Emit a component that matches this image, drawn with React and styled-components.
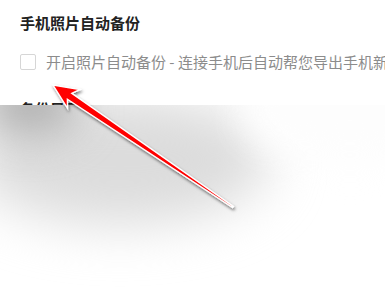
import React from 'react';
import styled, { createGlobalStyle } from 'styled-components';

const GlobalStyle = createGlobalStyle`
  html, body {
    margin: 0;
    background: #fff;
  }
  body {
    font-family: "Noto Sans CJK SC", "Noto Sans", sans-serif;
  }
`;

const Page = styled.div`
  position: relative;
  width: 385px;
  height: 300px;
  overflow: hidden;
  background: #fff;
`;

const Panel = styled.div`
  padding: 12px 0 0 20px;
  display: flex;
  flex-direction: column;
`;

const Heading = styled.h3`
  margin: ${(props) => props.$gap || 0}px 0 0;
  font-size: 15px;
  line-height: 22px;
  font-weight: 700;
  color: #222;
  white-space: nowrap;
`;

const OptionRow = styled.label`
  margin-top: 19px;
  display: flex;
  align-items: center;
  gap: 10px;
  white-space: nowrap;
`;

const Box = styled.span`
  flex: none;
  width: 14px;
  height: 14px;
  border: 1.5px solid #d6d6d6;
  border-radius: 2px;
  background: #fff;
`;

const OptionText = styled.span`
  font-size: 15px;
  line-height: 18px;
  color: #8c8c8c;
`;

const Shade = styled.div`
  position: absolute;
  left: 0;
  top: 105px;
  width: 385px;
  height: 195px;
  overflow: hidden;
  background: #fff;
`;

const Blob = styled.div`
  position: absolute;
  border-radius: 50%;
  filter: blur(${(props) => props.$blur}px);
  background: ${(props) => props.$color};
  left: ${(props) => props.$x}px;
  top: ${(props) => props.$y}px;
  width: ${(props) => props.$w}px;
  height: ${(props) => props.$h}px;
`;

const ArrowLayer = styled.svg`
  position: absolute;
  left: 0;
  top: 0;
  width: 385px;
  height: 300px;
  pointer-events: none;
`;

function Arrow() {
  return (
    <ArrowLayer viewBox="0 0 385 300">
      <defs>
        <filter id="sh" x="-20%" y="-20%" width="140%" height="140%">
          <feDropShadow dx="1" dy="2" stdDeviation="1.6" floodColor="#000" floodOpacity="0.55" />
        </filter>
      </defs>
      <polygon
        points="53,85 80,89.5 71.8,93.4 233.4,206.4 232.6,207.6 67.4,99.2 67.5,108.3"
        fill="#ff0000"
        stroke="#fff"
        strokeWidth="1.4"
        strokeLinejoin="miter"
        filter="url(#sh)"
      />
    </ArrowLayer>
  );
}

export default function App() {
  return (
    <Page>
      <GlobalStyle />
      <Panel>
        <Heading>手机照片自动备份</Heading>
        <OptionRow>
          <Box />
          <OptionText>开启照片自动备份 - 连接手机后自动帮您导出手机新照片</OptionText>
        </OptionRow>
        <Heading $gap={27}>备份目录</Heading>
      </Panel>
      <Shade>
        <Blob $x={-30} $y={-10} $w={300} $h={130} $color="#dcdcdc" $blur={26} />
        <Blob $x={-20} $y={-30} $w={100} $h={60} $color="#b0b0b0" $blur={20} />
        <Blob $x={240} $y={-50} $w={220} $h={110} $color="#fdfdfd" $blur={18} />
      </Shade>
      <Arrow />
    </Page>
  );
}
